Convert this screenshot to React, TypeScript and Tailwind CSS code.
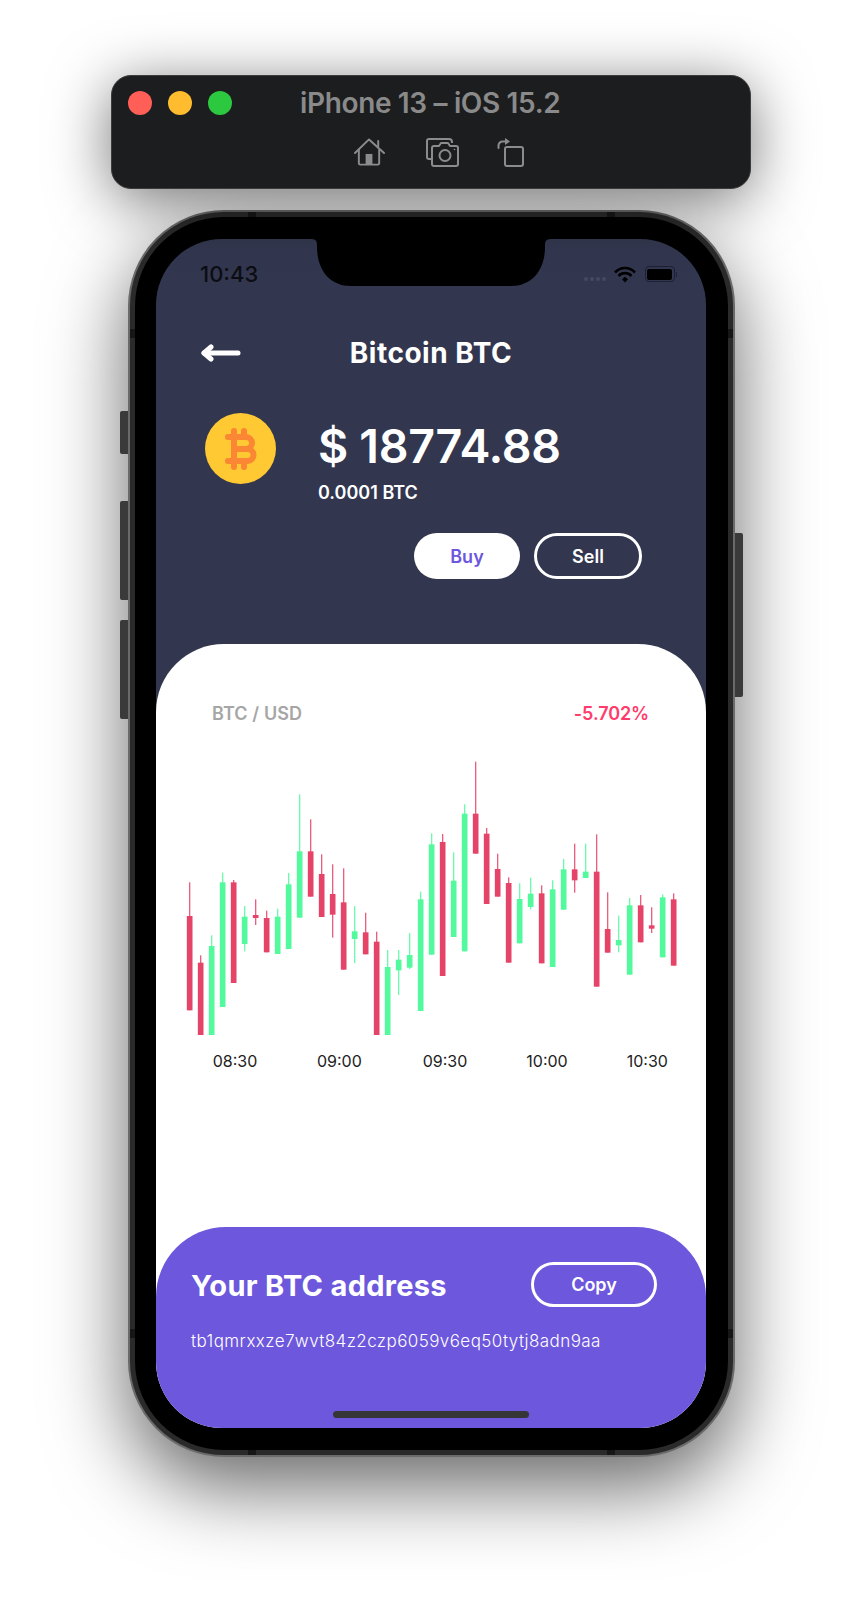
const RED = "#e64369";
const GREEN = "#52fa9d";

// [x, wickTop, wickBottom, bodyTop, bodyBottom, up] measured at 3x
const candles: [number, number, number, number, number, boolean][] = [
  [59, 397, 781, 498, 781, false],
  [92, 616, 855, 638, 855, false],
  [125, 556, 855, 588, 855, true],
  [158, 368, 771, 397, 771, true],
  [191, 390, 699, 397, 699, false],
  [224, 468, 604, 500, 582, true],
  [257, 448, 525, 495, 504, false],
  [290, 482, 607, 504, 607, false],
  [323, 476, 612, 500, 612, true],
  [356, 369, 597, 403, 597, true],
  [389, 133, 503, 304, 503, true],
  [422, 208, 440, 304, 440, false],
  [455, 313, 501, 372, 501, false],
  [488, 343, 563, 432, 494, false],
  [521, 355, 659, 457, 659, false],
  [554, 468, 639, 544, 567, true],
  [587, 488, 613, 547, 613, false],
  [620, 545, 855, 575, 855, false],
  [653, 600, 855, 651, 855, true],
  [686, 600, 735, 629, 661, true],
  [719, 549, 657, 615, 653, true],
  [752, 425, 783, 448, 783, true],
  [785, 250, 614, 283, 614, true],
  [818, 252, 678, 276, 678, false],
  [851, 307, 561, 392, 561, true],
  [884, 163, 604, 191, 604, true],
  [917, 35, 311, 191, 311, false],
  [950, 234, 462, 251, 462, false],
  [983, 311, 440, 357, 440, false],
  [1016, 382, 638, 399, 638, false],
  [1049, 400, 580, 447, 580, true],
  [1082, 383, 478, 431, 471, true],
  [1115, 406, 640, 430, 640, false],
  [1148, 391, 651, 418, 651, true],
  [1181, 327, 479, 358, 479, true],
  [1214, 281, 428, 358, 391, false],
  [1247, 281, 384, 365, 384, true],
  [1280, 253, 710, 365, 710, false],
  [1313, 427, 608, 537, 608, false],
  [1346, 497, 607, 570, 586, true],
  [1379, 444, 674, 466, 674, true],
  [1412, 435, 577, 466, 577, false],
  [1445, 472, 549, 526, 536, false],
  [1478, 433, 622, 442, 622, true],
  [1511, 430, 647, 448, 647, false],
];

const timeLabels: [number, string][] = [
  [195, "08:30"],
  [508, "09:00"],
  [825, "09:30"],
  [1131, "10:00"],
  [1432, "10:30"],
];

const CandleChart = () => (
  <svg width="520" height="330" viewBox="0 0 1560 990" className="block">
    {candles.map(([x, wickTop, wickBottom, bodyTop, bodyBottom, up]) => (
      <g key={x} fill={up ? GREEN : RED}>
        <rect x={x - 2} y={wickTop} width="4" height={wickBottom - wickTop} opacity="0.85" />
        <rect x={x - 8.5} y={bodyTop} width="17" height={bodyBottom - bodyTop} />
      </g>
    ))}
    {timeLabels.map(([x, label]) => (
      <text key={label} x={x} y="950" textAnchor="middle" fontSize="48" fill="#222222">
        {label}
      </text>
    ))}
  </svg>
);

const HomeIcon = () => (
  <svg width="31" height="29" viewBox="0 0 32 29" fill="none" stroke="#8c8c8c" strokeWidth="2" strokeLinejoin="round" strokeLinecap="round">
    <path d="M1 15 15.500 1 31 15" />
    <path d="M25 8V2.500" />
    <path d="M5 12v13.500a1.500 1.500 0 0 0 1.500 1.500h18a1.500 1.500 0 0 0 1.500-1.500V12" />
    <rect x="12" y="16" width="7" height="11" fill="#8c8c8c" stroke="none" />
  </svg>
);

const CameraIcon = () => (
  <svg width="34" height="29" viewBox="0 0 34 29" fill="none" stroke="#8c8c8c" strokeWidth="2" strokeLinejoin="round">
    <path d="M6 21H3a2 2 0 0 1-2-2V3a2 2 0 0 1 2-2h20a3 3 0 0 1 3 3v1" />
    <path d="M6 10a2 2 0 0 1 2-2h5l2-3h7l2 3h6a2 2 0 0 1 2 2v16a2 2 0 0 1-2 2H8a2 2 0 0 1-2-2z" />
    <circle cx="19" cy="17.500" r="5.500" />
    <circle cx="28.500" cy="11.500" r="0.800" fill="#8c8c8c" stroke="none" />
  </svg>
);

const RotateIcon = () => (
  <svg width="27" height="30" viewBox="0 0 27 30" fill="none" stroke="#8c8c8c" strokeWidth="2" strokeLinejoin="round" strokeLinecap="round">
    <rect x="8" y="10" width="18" height="19" rx="2" />
    <path d="M1.500 11V8.500a4 4 0 0 1 4-4H9" />
    <path d="M8 1l5 3.500L8 8z" fill="#8c8c8c" stroke="none" />
  </svg>
);

const BitcoinLogo = () => (
  <svg width="71" height="71" viewBox="0 0 71 71" fill="none">
    <circle cx="35.500" cy="35.500" r="35.500" fill="#ffc933" />
    <path
      d="M23 24H41a6 6 0 0 1 0 12H29M29 36H42.500a6 6 0 0 1 0 12H23M29 24V48M29 18V24M39 18V24M29 48V54M39 48V54"
      stroke="#fb8633"
      strokeWidth="6"
      strokeLinecap="round"
    />
  </svg>
);

const StatusIcons = () => (
  <div className="flex items-center">
    <div className="flex gap-[2px] mt-[10px] mr-[8px]">
      {[0, 1, 2, 3].map((i) => (
        <span key={i} className="w-[4px] h-[4px] rounded-full bg-[#454a61]" />
      ))}
    </div>
    <svg width="22" height="17" viewBox="0 0 22 17" fill="none" stroke="#000" strokeWidth="2.600">
      <path d="M1 6.500C6.500 0.500 15.500 0.500 21 6.500" />
      <path d="M4.500 10C8 6.200 14 6.200 17.500 10" />
      <path d="M8 13.200 11 10.800 14 13.200 11 16.500z" fill="#000" stroke="none" />
    </svg>
    <div className="ml-[9px] w-[30px] h-[16px] rounded-[4px] border-[1.500px] border-[#1e2133] p-[1.500px]">
      <div className="w-full h-full rounded-[2px] bg-black" />
    </div>
    <div className="ml-px w-[1.500px] h-[5px] bg-[#1e2133]" />
  </div>
);

const PhoneNotch = () => (
  <svg width="240" height="47" viewBox="0 0 240 47" className="absolute top-0 left-[155px]">
    <path d="M0 0H240C234 0 234 3 234 8C234 30 222 47 200 47H40C18 47 6 30 6 8C6 3 6 0 0 0Z" fill="#000" />
  </svg>
);

const App = () => {
  return (
    <div
      className="relative w-[862px] h-[1608px] overflow-hidden bg-white flex flex-col items-center pt-[75px] pl-px"
      style={{ fontFamily: "Inter, sans-serif" }}
    >
      {/* simulator toolbar */}
      <div className="relative z-10 -ml-[1px] w-[640px] h-[114px] shrink-0 rounded-[20px] bg-[#1c1d1f] border border-[#3c3c3e] shadow-[0_10px_60px_rgba(0,0,0,0.55)] pt-[10px]">
        <div className="flex items-center pl-[16px]">
          <span className="w-[24px] h-[24px] rounded-full bg-[#ff5f57]" />
          <span className="ml-[16px] w-[24px] h-[24px] rounded-full bg-[#febc2e]" />
          <span className="ml-[16px] w-[24px] h-[24px] rounded-full bg-[#2cc840]" />
          <span className="ml-[68px] text-[28px] leading-[34px] font-semibold text-[#8a8a8a] tracking-[-0.35px]">iPhone 13 – iOS 15.2</span>
        </div>
        <div className="flex items-center mt-[17px] pl-[242px]">
          <HomeIcon />
          <div className="ml-[41px]">
            <CameraIcon />
          </div>
          <div className="ml-[37px]">
            <RotateIcon />
          </div>
        </div>
      </div>

      {/* phone */}
      <div className="relative mt-[21px] w-[607px] h-[1247px] shrink-0 rounded-[96px] border-2 border-[#6a6a6a] bg-[#2a2a2a] p-[5px] shadow-[0_30px_80px_rgba(0,0,0,0.6)]">
        <div className="absolute left-[-10px] top-[199px] w-[8px] h-[43px] rounded-l-[2px] bg-[#3a3a3a]" />
        <div className="absolute left-[-10px] top-[289px] w-[8px] h-[99px] rounded-l-[2px] bg-[#3a3a3a]" />
        <div className="absolute left-[-10px] top-[408px] w-[8px] h-[99px] rounded-l-[2px] bg-[#3a3a3a]" />
        <div className="absolute right-[-10px] top-[321px] w-[8px] h-[164px] rounded-r-[2px] bg-[#3a3a3a]" />
        <div className="absolute top-0 left-[118px] w-[8px] h-[5px] bg-[#161616]" />
        <div className="absolute top-0 right-[118px] w-[8px] h-[5px] bg-[#161616]" />
        <div className="absolute bottom-0 left-[118px] w-[8px] h-[5px] bg-[#161616]" />
        <div className="absolute bottom-0 right-[118px] w-[8px] h-[5px] bg-[#161616]" />
        <div className="absolute left-0 top-[117px] w-[5px] h-[9px] bg-[#161616]" />
        <div className="absolute right-0 top-[117px] w-[5px] h-[9px] bg-[#161616]" />
        <div className="absolute left-0 bottom-[117px] w-[5px] h-[9px] bg-[#161616]" />
        <div className="absolute right-0 bottom-[117px] w-[5px] h-[9px] bg-[#161616]" />
        <div className="relative w-full h-full rounded-[89px] bg-black pt-[22px] pl-[21px]">
          <div className="relative w-[550px] h-[1189px] rounded-[66px] overflow-hidden bg-[#32374f] flex flex-col">
            <PhoneNotch />

            {/* top panel */}
            <div className="h-[405px] shrink-0 flex flex-col">
              <div className="h-[70px] flex items-center justify-between pl-[44px] pr-[29px] text-[22px] font-medium text-[#0c0d12]">
                <span>10:43</span>
                <StatusIcons />
              </div>
              <div className="relative mt-[24px] h-[40px] flex items-center justify-center">
                <svg width="40" height="18" viewBox="0 0 40 18" fill="none" stroke="#fff" strokeWidth="5" strokeLinecap="round" strokeLinejoin="round" className="absolute left-[45px] top-[11px]">
                  <path d="M3 9H37" />
                  <path d="M10 3 3 9 10 15" />
                </svg>
                <h1 className="text-[28px] font-bold text-white tracking-[0.5px]">Bitcoin BTC</h1>
              </div>
              <div className="flex mt-[40px] pl-[49px]">
                <BitcoinLogo />
                <div className="ml-[42px] mt-[3px]">
                  <div className="text-[46.500px] leading-[60px] font-semibold text-white tracking-[-0.3px]">$ 18774.88</div>
                  <div className="mt-[5px] text-[18px] leading-[24px] font-semibold text-white">0.0001 BTC</div>
                </div>
              </div>
              <div className="flex justify-end mt-[28px] pr-[64px] gap-[14px]">
                <button className="w-[106px] h-[46px] rounded-full bg-white text-[18px] font-semibold text-[#6c57dd]">Buy</button>
                <button className="w-[108px] h-[46px] rounded-full border-[3px] border-white text-[18px] font-semibold text-white">Sell</button>
              </div>
            </div>

            {/* chart card */}
            <div className="flex-1 min-h-0 flex flex-col rounded-t-[68px] bg-white">
              <div className="flex items-center justify-between mt-[57px] pl-[56px] pr-[57px] text-[18px] leading-[26px] font-semibold">
                <span className="text-[#a6a6a6] tracking-[0.1px]">BTC / USD</span>
                <span className="text-[#ff3b6b] tracking-[-0.1px]">-5.702%</span>
              </div>
              <div className="mt-[23px] ml-[14px]">
                <CandleChart />
              </div>

              {/* address panel */}
              <div className="mt-auto h-[201px] shrink-0 rounded-t-[70px] bg-[#6c57dd] pt-[36px] pl-[35px] pr-[50px]">
                <div className="flex items-center justify-between">
                  <span className="text-[29px] font-bold text-white tracking-[0.3px]">Your BTC address</span>
                  <button className="w-[126px] h-[45px] -translate-y-px translate-x-px rounded-full border-[3px] border-white text-[18px] font-semibold text-white">Copy</button>
                </div>
                <p className="mt-[21px] text-[17px] leading-[24px] font-light text-white tracking-[0.42px] whitespace-nowrap">tb1qmrxxze7wvt84z2czp6059v6eq50tytj8adn9aa</p>
              </div>
              <div className="absolute bottom-[10px] left-[177px] w-[196px] h-[7px] rounded-full bg-[#363636]" />
            </div>
          </div>
        </div>
      </div>
    </div>
  );
};

export default App;
